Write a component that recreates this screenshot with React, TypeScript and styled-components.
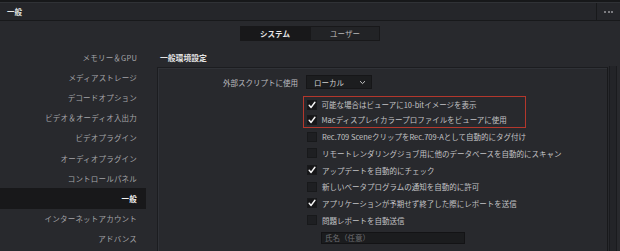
import React from 'react';
import styled, { createGlobalStyle } from 'styled-components';

const Global = createGlobalStyle`
  html, body {
    margin: 0;
    padding: 0;
    background: #28292d;
  }
  body {
    font-family: "Noto Sans CJK JP", "Noto Sans", sans-serif;
  }
`;

const Screen = styled.div`
  width: 620px;
  height: 251px;
  overflow: hidden;
  display: flex;
  flex-direction: column;
  background: #28292d;
  & > * {
    flex-shrink: 0;
  }
`;

const TopStrip = styled.div`
  height: 2px;
  background: #17181a;
  border-bottom: 1px solid #303236;
`;

const TitleBar = styled.div`
  height: 17px;
  display: flex;
  align-items: stretch;
  background: #25262a;
  border-bottom: 1px solid #18191b;
`;

const Title = styled.div`
  flex: 1;
  display: flex;
  align-items: center;
  padding-left: 7px;
  font-size: 7.5px;
  font-weight: 700;
  color: #e6e6e6;
`;

const MenuButton = styled.div`
  width: 23px;
  border-left: 1px solid #18191b;
  display: flex;
  align-items: center;
  justify-content: center;
  gap: 1.5px;
`;

const Dot = styled.span`
  width: 2px;
  height: 2px;
  border-radius: 50%;
  background: #9a9a9e;
`;

const Tabs = styled.div`
  display: flex;
  justify-content: center;
  padding-top: 5px;
  height: 15px;
`;

const Tab = styled.div<{ $active?: boolean }>`
  width: 70px;
  height: 15px;
  box-sizing: border-box;
  display: flex;
  align-items: center;
  justify-content: center;
  font-size: 7.5px;
  font-weight: ${p => (p.$active ? 700 : 400)};
  color: ${p => (p.$active ? '#e8e8e8' : '#b9b9b9')};
  background: ${p => (p.$active ? '#18181a' : '#222326')};
  border: 1px solid #18181a;
`;

const Body = styled.div`
  flex: 1;
  min-height: 0;
  display: flex;
  padding-top: 6px;
`;

const Sidebar = styled.div`
  width: 146px;
  display: flex;
  flex-direction: column;
  flex-shrink: 0;
`;

const NavItem = styled.div<{ $active?: boolean }>`
  height: 20.2px;
  flex-shrink: 0;
  display: flex;
  align-items: center;
  justify-content: flex-end;
  padding-right: 9px;
  font-size: 7.5px;
  letter-spacing: 0.2px;
  color: ${p => (p.$active ? '#f2f2f2' : '#a4a4a8')};
  font-weight: ${p => (p.$active ? 700 : 400)};
  background: ${p => (p.$active ? '#18181a' : 'transparent')};
`;

const Content = styled.div`
  flex: 1;
  display: flex;
  flex-direction: column;
  padding-left: 11px;
`;

const SectionTitle = styled.div`
  height: 20px;
  flex-shrink: 0;
  display: flex;
  align-items: center;
  padding-left: 3px;
  font-size: 7.8px;
  font-weight: 700;
  color: #e4e4e4;
`;

const PanelRow = styled.div`
  flex: 1;
  display: flex;
  gap: 1px;
`;

const Panel = styled.div`
  flex: 1;
  border: 1px solid #1c1d20;
  border-right-color: #18191b;
  border-bottom: none;
  box-shadow: inset 1px 1px 0 #303237;
  padding-top: 7px;
  display: flex;
  flex-direction: column;
  & > * {
    flex-shrink: 0;
  }
`;

const Scrollbar = styled.div`
  width: 6px;
  margin-right: 3px;
  margin-top: -1px;
  background: #232428;
  border-left: 1px solid #1a1b1e;
  border-right: 1px solid #1a1b1e;
`;

const FieldRow = styled.div`
  display: grid;
  grid-template-columns: 140px 1fr;
  column-gap: 8px;
  align-items: center;
  height: 14px;
`;

const FieldLabel = styled.div`
  text-align: right;
  font-size: 7.5px;
  color: #bdbdc0;
`;

const Select = styled.div`
  width: 66px;
  height: 14px;
  box-sizing: border-box;
  background: #1c1d1f;
  border: 1px solid #161618;
  display: flex;
  align-items: center;
  justify-content: space-between;
  padding: 0 5px 0 7px;
  font-size: 7.5px;
  color: #d0d0d0;
`;

const Options = styled.div`
  margin-top: 7px;
  padding-left: 145px;
  display: flex;
  flex-direction: column;
  & > * {
    flex-shrink: 0;
  }
`;

const Highlight = styled.div`
  width: 223px;
  box-sizing: border-box;
  border: 1.5px solid #b3372c;
  padding-left: 2.5px;
`;

const CheckRow = styled.div`
  height: 16.7px;
  display: flex;
  align-items: center;
  gap: 5px;
  padding-left: 4px;
  font-size: 7.5px;
  color: #c3c3c6;
  white-space: nowrap;
`;

const InHighlight = styled(CheckRow)`
  padding-left: 0;
  height: 15.2px;
`;

const Box = styled.span<{ $checked?: boolean }>`
  width: 10px;
  height: 10px;
  box-sizing: border-box;
  flex-shrink: 0;
  background: ${p => (p.$checked ? '#161618' : '#1e1f22')};
  border: 1px solid #18191b;
  display: flex;
  align-items: center;
  justify-content: center;
`;

const TextField = styled.div`
  margin: 3px 0 6px 18px;
  width: 144px;
  height: 12px;
  box-sizing: border-box;
  background: #1b1c1e;
  border: 1px solid #131315;
  display: flex;
  align-items: center;
  padding-left: 3px;
  font-size: 7.5px;
  color: #6e6e72;
`;

function Check() {
  return (
    <svg width="8" height="8" viewBox="0 0 8 8">
      <path d="M1.2 4.3 L3.1 6.4 L6.9 1.3" fill="none" stroke="#f4f4f4" strokeWidth="1.5" strokeLinecap="round" strokeLinejoin="round" />
    </svg>
  );
}

function Chevron() {
  return (
    <svg width="7" height="5" viewBox="0 0 7 5">
      <path d="M1 1.2 L3.5 3.6 L6 1.2" fill="none" stroke="#c8c8c8" strokeWidth="1" />
    </svg>
  );
}

const navItems = [
  'メモリー＆GPU',
  'メディアストレージ',
  'デコードオプション',
  'ビデオ＆オーディオ入出力',
  'ビデオプラグイン',
  'オーディオプラグイン',
  'コントロールパネル',
  '一般',
  'インターネットアカウント',
  'アドバンス',
];

const options: [string, boolean][] = [
  ['Rec.709 SceneクリップをRec.709-Aとして自動的にタグ付け', false],
  ['リモートレンダリングジョブ用に他のデータベースを自動的にスキャン', false],
  ['アップデートを自動的にチェック', true],
  ['新しいベータプログラムの通知を自動的に許可', false],
  ['アプリケーションが予期せず終了した際にレポートを送信', true],
  ['問題レポートを自動送信', false],
];

export default function App() {
  return (
    <Screen>
      <Global />
      <TopStrip />
      <TitleBar>
        <Title>一般</Title>
        <MenuButton>
          <Dot />
          <Dot />
          <Dot />
        </MenuButton>
      </TitleBar>
      <Tabs>
        <Tab $active>システム</Tab>
        <Tab>ユーザー</Tab>
      </Tabs>
      <Body>
        <Sidebar>
          {navItems.map(item => (
            <NavItem key={item} $active={item === '一般'}>
              {item}
            </NavItem>
          ))}
        </Sidebar>
        <Content>
          <SectionTitle>一般環境設定</SectionTitle>
          <PanelRow>
            <Panel>
              <FieldRow>
                <FieldLabel>外部スクリプトに使用</FieldLabel>
                <Select>
                  <span>ローカル</span>
                  <Chevron />
                </Select>
              </FieldRow>
              <Options>
                <Highlight>
                  <InHighlight>
                    <Box $checked>
                      <Check />
                    </Box>
                    可能な場合はビューアに10-bitイメージを表示
                  </InHighlight>
                  <InHighlight>
                    <Box $checked>
                      <Check />
                    </Box>
                    Macディスプレイカラープロファイルをビューアに使用
                  </InHighlight>
                </Highlight>
                {options.map(([label, checked]) => (
                  <CheckRow key={label}>
                    <Box $checked={checked}>{checked && <Check />}</Box>
                    {label}
                  </CheckRow>
                ))}
                <TextField>氏名（任意）</TextField>
                <TextField />
              </Options>
            </Panel>
            <Scrollbar />
          </PanelRow>
        </Content>
      </Body>
    </Screen>
  );
}
